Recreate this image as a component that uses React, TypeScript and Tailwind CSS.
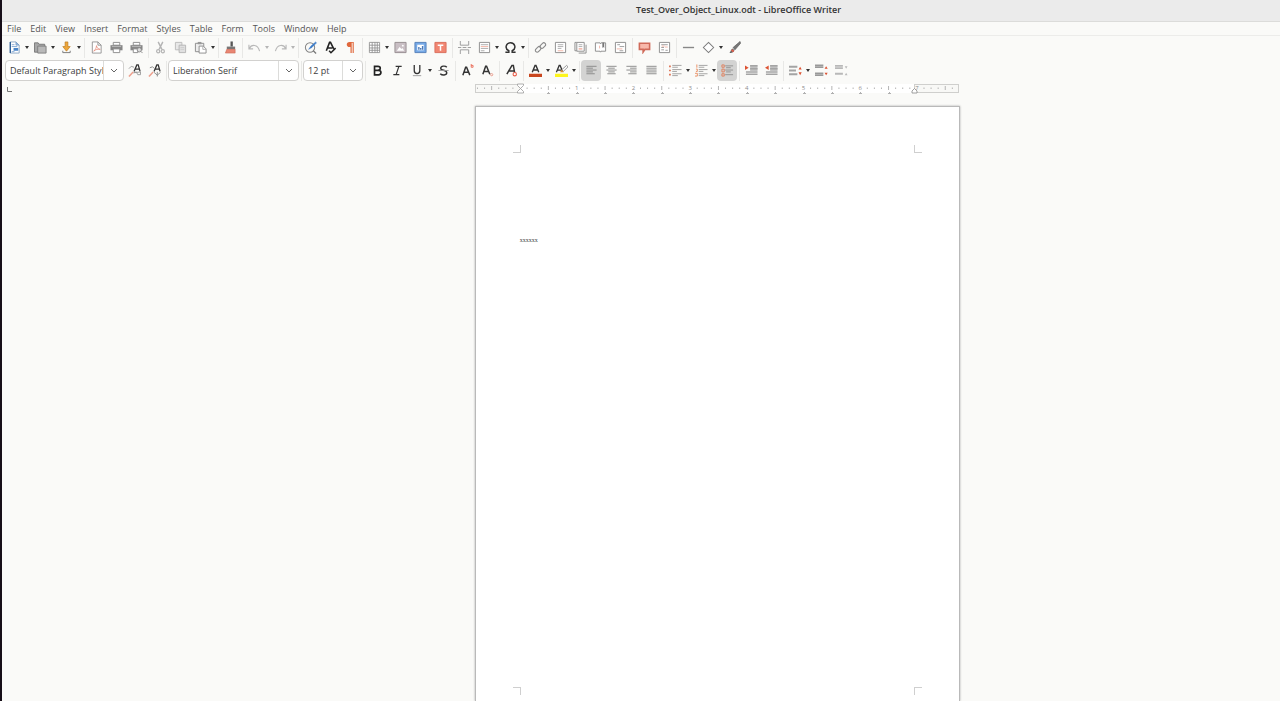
import React from 'react';

const G = '#8a8a8a';
const D = '#333333';
const R = '#e8604c';
const P = '#eda08e';
const B = '#3a7bc8';

// All glyphs are drawn on a 14x14 grid
const ICONS: Record<string, React.ReactNode> = {
  new: (<><path d="M2.500 1h6l3.500 3.500v8.500h-9.500z" fill="#fff" stroke="#8aa6c6" /><path d="M8.500 1v3.500h3.500z" fill="#8fb3dc" stroke="#7d9fc6" strokeWidth=".7" /><path d="M4 4h3M4 6h6M4 11.500h3" stroke="#7fa5d2" /><path d="M6 7.500h5v3h-5z" fill="#4a85c8" /><path d="M2.500 1v12" stroke="#2f5f96" strokeWidth="1.500" /></>),
  open: (<><path d="M.5 2h4l1 1.500h6v8.500h-11z" fill="#a8a8a8" stroke="#777" /><path d="M4 5.500h9v7.500h-9z" fill="#b9b9b9" stroke="#808080" /></>),
  save: (<><path d="M5.500 1h3v5h2.500l-4 5-4-5h2.500z" fill="#eda63a" stroke="#b9771b" strokeWidth=".7" /><path d="M3 10.500v2h8v-2" stroke="#777" fill="none" /></>),
  pdf: (<><path d="M2.500 1h6l3.500 3.500v8.500h-9.500zM8.500 1v3.500h3.500" fill="#fff" stroke={G} strokeWidth=".9" /><path d="M4 11c2-2 3-4 3-6 0 2 2 4 4 4-2-.5-5 0-7 2z" fill="none" stroke="#e58a78" strokeWidth=".8" /></>),
  print: (<><path d="M3.500 1.500h7v3h-7z" fill="#fff" stroke={G} /><path d="M.5 4.500h13v5.500h-13z" fill="#858585" /><path d="M2 6h10" stroke="#bbb" /><path d="M3.500 8.500h7v4h-7z" fill="#fff" stroke={G} /></>),
  preview: (<><path d="M3.500 1.500h7v3h-7z" fill="#fff" stroke={G} /><path d="M.5 4.500h13v5.500h-13z" fill="#858585" /><path d="M2 6h10" stroke="#bbb" /><path d="M3.500 8.500h5v4h-5z" fill="#fff" stroke={G} /><circle cx="10" cy="9.500" r="2.300" fill="#ddd" stroke={G} /><path d="M11.500 11l2 2" stroke={G} /></>),
  cut: (<><path d="M4.500 1l4 8M9.500 1l-4 8" stroke="#b4b4b4" strokeWidth="1.500" /><circle cx="4.500" cy="11" r="1.700" fill="none" stroke="#b4b4b4" strokeWidth="1.300" /><circle cx="9.500" cy="11" r="1.700" fill="none" stroke="#b4b4b4" strokeWidth="1.300" /></>),
  copy: (<><path d="M1.500 1.500h7v8h-7z" fill="#e8e8e8" stroke="#bbb" /><path d="M5.500 4.500h7v8h-7z" fill="#e0e0e0" stroke="#b4b4b4" /><path d="M7 7h4M7 9h4" stroke="#ccc" /></>),
  paste: (<><path d="M1.500 2.500h9v9h-9z" fill="#eee" stroke={G} /><path d="M4 1h4v2.500h-4z" fill="#999" /><path d="M5.500 5.500h4.500l3 3v4.500h-7.500z" fill="#fff" stroke={G} /><path d="M9.500 6v3h3" fill="none" stroke={G} strokeWidth=".7" /></>),
  clone: (<><path d="M7 .5h2.500v5.500h-2.500z" fill="#555" /><path d="M3 6h9v3h-9z" fill="#777" /><path d="M3 9h9v4h-10.500z" fill="#e98673" stroke="#c96450" strokeWidth=".6" /></>),
  undo: (<path d="M1 4v4.500h4.500M1.500 8c2-4.500 9-5 11 3" fill="none" stroke="#b8b8b8" strokeWidth="1.200" />),
  redo: (<path d="M13 4v4.500h-4.500M12.500 8c-2-4.500-9-5-11 3" fill="none" stroke="#b8b8b8" strokeWidth="1.200" />),
  find: (<><circle cx="6.500" cy="7" r="5" fill="none" stroke="#858585" strokeWidth="1.100" /><path d="M10 10.500l3 3" stroke="#777" strokeWidth="1.300" /><path d="M12.500 1l-5 4.500-2.500 3.500 3.500-2 5-5z" fill={B} stroke={B} strokeWidth=".5" /></>),
  spell: (<><path d="M2.500 10.500l3.500-9h1l3.500 7M4 7.500h5" fill="none" stroke="#222" strokeWidth="1.700" /><path d="M5.500 10.500l2 2.200 5-5" fill="none" stroke="#222" strokeWidth="1.600" /></>),
  pilcrow: (<path d="M10.500 1h-4.500c-4 0-4 5.500 0 5.500h1v6.500h1.300v-11h1v11h1.200z" fill="#e0683c" />),
  table: (<><path d="M1.500 1.500h11v11h-11z" fill="#fff" /><path d="M1.500 1.500h11v11h-11zM1.500 4.500h11M1.500 7.500h11M1.500 10h11M4.500 1.500v11M7.500 1.500v11M10 1.500v11" fill="none" stroke="#8d8d8d" strokeWidth=".9" /></>),
  image: (<><path d="M1 1.500h12v11h-12z" fill="#c9bfc4" stroke="#958c90" /><path d="M3 10.500l3-4 2 2 1-1 2 3z" fill="#fff" /><circle cx="9.500" cy="5" r="1" fill="#fff" /></>),
  chart: (<><path d="M1 1.500h12v11h-12z" fill="#76a9e6" stroke="#5580b8" /><path d="M3.500 4h7v6h-7z" fill="#fff" /><path d="M4.500 9.500v-3h1.500v3M6.500 9.500v-2h1.500v2M8.500 9.500v-4h1.500v4" fill="#4b79b8" /></>),
  textbox: (<><path d="M1 1.500h12v11h-12z" fill="#f18672" stroke="#d96d5b" /><path d="M4 4.500h6M7 4.500v6" stroke="#fff" strokeWidth="1.600" /></>),
  pagebreak: (<path d="M2.500 0v4.500h9v-4.500M2.500 14v-4.500h9v4.500M0 7h3.500M5 7h4M10.500 7h3.500" fill="none" stroke="#999" />),
  field: (<><path d="M1.500 1.500h11v11h-11z" fill="#fff" stroke={G} /><path d="M3 4h8M3 8h8M3 10.500h4" stroke="#aaa" /><path d="M3 6h8" stroke={P} strokeWidth=".8" /></>),
  omega: (<path d="M1.500 12h3.700v-1.500c-5-2.500-3-8.500 1.800-8.500s6.800 6 1.800 8.500v1.500h3.700" fill="none" stroke={D} strokeWidth="1.600" />),
  link: (<g fill="none" stroke={G} strokeWidth="1.200"><rect x="6" y="3" width="7" height="4" rx="2" transform="rotate(-45 9.500 5)" /><rect x="1" y="7" width="7" height="4" rx="2" transform="rotate(-45 4.500 9)" /></g>),
  footnote: (<><path d="M1.500 1.500h11v11h-11z" fill="#fff" stroke={G} /><path d="M4 4h6M4 6h6M4 8h4" stroke="#999" strokeWidth=".8" /><path d="M4 10.500h6" stroke={P} strokeWidth=".8" /></>),
  endnote: (<><path d="M3 1.500h-2v9h2M5 13h8v-9" fill="none" stroke={G} /><path d="M3 1.500h8v9.500h-8z" fill="#fff" stroke={G} /><path d="M5 4h4M5 6h4" stroke="#999" strokeWidth=".8" /><path d="M5 8.500h4" stroke={P} strokeWidth="1.300" /></>),
  bookmark: (<><path d="M1.500 2h5l.5 1 .5-1h5v9h-5l-.5 1-.5-1h-5z" fill="#fff" stroke={G} /><path d="M9 1.500h2v6l-1-1-1 1z" fill="#777" /><path d="M6 5v3" stroke={P} strokeWidth=".8" /></>),
  crossref: (<><path d="M1.500 1.500h11v11h-11z" fill="#fff" stroke={G} /><path d="M3.500 4h3M6 6h5M6 10.500h4" stroke="#999" /><path d="M3 8.500h6" stroke={P} strokeWidth=".8" /></>),
  comment: (<path d="M1.500 2.500h11v6.500h-5l-2 3v-3h-4z" fill="#f8b8aa" stroke="#d06a59" strokeWidth="1.700" />),
  track: (<><path d="M1.500 1.500h11v11h-11z" fill="#fff" stroke={G} /><path d="M3.500 4h7M3.500 9.500h3M3.500 7h3M8 10h2.500" stroke="#999" /><path d="M7.500 6.500h3M4 5.500h3" stroke={P} strokeWidth=".8" /></>),
  line: (<path d="M1 7h12" stroke="#888" strokeWidth="1.500" />),
  diamond: (<path d="M7 1.500l5.500 5.500-5.500 5.500-5.500-5.500z" fill="#fff" stroke="#7c7c7c" strokeWidth="1.100" />),
  brush: (<><path d="M13 .5l-7.500 6.500 2 2.500 6-7z" fill="#777" stroke="#555" strokeWidth=".7" /><path d="M5 8l2 2c-1 2.500-3 3-5.500 3 1.500-1.500 1-3.500 3.500-5z" fill="#666" /><path d="M4 9.500l2 2" stroke={R} strokeWidth="2" /></>),
  styleUpdate: (<><path d="M6.500 8l3-7h1.500l2 7M8 5.500h4" fill="none" stroke={D} strokeWidth="1.400" /><path d="M1 5l2.500-2.500 3 1M6 9.500l3-1 1.500 3h3v-3z" fill="none" stroke="#999" /><path d="M5.500 8.500l-4.500 5" stroke={P} strokeWidth="1.600" /></>),
  styleNew: (<><path d="M6.500 8l3-7h1.500l2 7M8 5.500h4" fill="none" stroke={D} strokeWidth="1.400" /><path d="M2 4l3-1 2 2M6.500 9l3.500 3 3.500-3M10 8.500v5" fill="none" stroke="#8a8a8a" /><path d="M5.500 8.500l-4.500 5" stroke={P} strokeWidth="1.600" /></>),
  bold: (<path d="M3.800 2.500h3.700c3.300 0 3.300 4.300 0 4.300h-3.700h4.200c3.600 0 3.600 4.900 0 4.900h-4.200z" fill="none" stroke="#222" strokeWidth="1.800" />),
  italic: (<path d="M5 2.500h6.500M2.500 11.500h6.500M8.500 2.500l-3 9" fill="none" stroke={D} strokeWidth="1.300" />),
  underline: (<><path d="M3.500 1v6c0 4.500 6 4.500 6 0v-6" fill="none" stroke={D} strokeWidth="1.400" /><path d="M2 12.500h9" stroke="#aaa" strokeWidth="1.200" /></>),
  strike: (<><path d="M10.500 3.500c-1.500-2-6.500-1.500-6.500 1 0 3 6.500 1.500 6.500 5 0 3-5 3-7 1" fill="none" stroke={D} strokeWidth="1.500" /><path d="M1.500 7h11" stroke="#999" /></>),
  sup: (<><path d="M2 12l3-8.500h1l3.500 8.500M3 9h5" fill="none" stroke={D} strokeWidth="1.600" /><path d="M11 0v3.500h2v-2h-2" fill="none" stroke={R} strokeWidth=".9" /></>),
  sub: (<><path d="M2 11l3-8.500h1l3.500 8.500M3 8h5" fill="none" stroke={D} strokeWidth="1.600" /><circle cx="11.500" cy="11.500" r="1.200" fill="none" stroke="#e99a8a" /></>),
  clear: (<><path d="M2 11l5.500-9.500h1.500l1.500 8.500M4.500 7.500h5" fill="none" stroke={D} strokeWidth="1.600" /><circle cx="10.500" cy="11" r="1.800" fill="#fff" stroke={R} strokeWidth="1.200" /></>),
  color: (<><path d="M3.500 9l3-7.500h1l3 7.500M4.500 6.500h5" fill="none" stroke={D} strokeWidth="1.500" /><path d="M0 10.500h14v3.500h-14z" fill="#c9471f" /></>),
  highlight: (<><path d="M1.500 9l3-7.500h1l2.500 6M2.500 6.500h5" fill="none" stroke={D} strokeWidth="1.400" /><path d="M12.500 1.500l-5 4.500 1.500 2 5-5z" fill="#fff" stroke="#777" strokeWidth=".8" /><path d="M7 6l2.500 3h-4z" fill="#d88b2e" /><path d="M0 10.500h14v3.500h-14z" fill="#fdf51c" /></>),
  left: (<path d="M1.500 2.500h11M1.500 4.500h7M1.500 6.500h11M1.500 8.500h7M1.500 10.500h9" stroke="#888" />),
  center: (<path d="M1.500 2.500h11M3.500 4.500h7M1.500 6.500h11M3.500 8.500h7M2.500 10.500h9" stroke="#888" />),
  right: (<path d="M1.500 2.500h11M5.500 4.500h7M1.500 6.500h11M5.500 8.500h7M3.500 10.500h9" stroke="#888" />),
  justify: (<path d="M1.500 2.500h11M1.500 4.500h11M1.500 6.500h11M1.500 8.500h11M1.500 10.500h11" stroke="#888" />),
  bullets: (<><path d="M0 2.500h2M0 7h2M0 11.500h2" stroke="#e07a5c" strokeWidth="1.800" /><path d="M3.500 1.500h10M3.500 3.500h6M3.500 6h10M3.500 8h5M3.500 10.500h10M3.500 12.500h6" stroke="#a0a0a0" /></>),
  numbers: (<><path d="M2 .5v3.500M1 5.500h1.500v2.500h-1.500M0 10h2.500v3h-2.500" fill="none" stroke="#e88b5f" /><path d="M4 1.500h9.500M4 3.500h6M4 6h9.500M4 8h5M4 10.500h9.500M4 12.500h6" stroke="#a0a0a0" /></>),
  outline: (<><path d="M1 1h2.500v2.500h-2.500zM1 5.500h2.500v3h-2.500zM1 10.500h2.500v2.500h-2.500z" fill="none" stroke="#e0805c" /><path d="M4.500 2h8.500M5.500 4h5M4.500 6.500h8.500M5.500 8.500h5M4.500 11.500h8.500" stroke="#909090" /></>),
  indent: (<><path d="M0 1.500l4 2.500-4 2.500z" fill="#dc5232" /><path d="M5.500 1.500h8v6h-8z" fill="#c0c0c0" /><path d="M5.500 2h8M5.500 5h8M1 8.500h12.500M1 11h12.500" stroke="#a4a4a4" strokeWidth="1.600" /></>),
  outdent: (<><path d="M4 1.500l-4 2.500 4 2.500z" fill="#dc5232" /><path d="M5.500 1.500h8v6h-8z" fill="#c0c0c0" /><path d="M5.500 2h8M5.500 5h8M1 8.500h12.500M1 11h12.500" stroke="#a4a4a4" strokeWidth="1.600" /></>),
  spacing: (<><path d="M0 3h9M0 7h7.500M0 11h9" stroke="#a4a4a4" strokeWidth="2" /><path d="M12 3l1.700 3h-3.400zM12 12l1.700-3h-3.400z" fill="#dc5232" /></>),
  paraUp: (<><path d="M0 1.500h9M0 3.500h9M0 10h9M0 12h9" stroke="#999" strokeWidth="1.700" /><path d="M12 2.500l1.700 2.500h-3.400zM12 12l1.700-2.500h-3.400z" fill="#dc5232" /></>),
  paraDown: (<><path d="M0 2h8.500M0 4.500h8.500M0 10.500h8.500" stroke="#b8b8b8" strokeWidth="1.900" /><path d="M12 5l1.500-2.500h-3zM12 9.500l1.500 2.500h-3z" fill="#bbb" /></>),
};

interface ToolItem {
  icon: string;
  label: string;
  split?: boolean;
  disabled?: boolean;
  active?: boolean;
}

const STANDARD: ToolItem[][] = [
  [{ icon: 'new', label: 'New', split: true }, { icon: 'open', label: 'Open', split: true }, { icon: 'save', label: 'Save', split: true }],
  [{ icon: 'pdf', label: 'Export as PDF' }, { icon: 'print', label: 'Print' }, { icon: 'preview', label: 'Print Preview' }],
  [{ icon: 'cut', label: 'Cut', disabled: true }, { icon: 'copy', label: 'Copy', disabled: true }, { icon: 'paste', label: 'Paste', split: true }],
  [{ icon: 'clone', label: 'Clone Formatting' }],
  [{ icon: 'undo', label: 'Undo', split: true, disabled: true }, { icon: 'redo', label: 'Redo', split: true, disabled: true }],
  [{ icon: 'find', label: 'Find and Replace' }, { icon: 'spell', label: 'Spelling' }, { icon: 'pilcrow', label: 'Formatting Marks' }],
  [{ icon: 'table', label: 'Insert Table', split: true }, { icon: 'image', label: 'Insert Image' }, { icon: 'chart', label: 'Insert Chart' }, { icon: 'textbox', label: 'Insert Text Box' }],
  [{ icon: 'pagebreak', label: 'Page Break' }, { icon: 'field', label: 'Insert Field', split: true }, { icon: 'omega', label: 'Special Character', split: true }],
  [{ icon: 'link', label: 'Hyperlink' }, { icon: 'footnote', label: 'Footnote' }, { icon: 'endnote', label: 'Endnote' }, { icon: 'bookmark', label: 'Bookmark' }, { icon: 'crossref', label: 'Cross-reference' }],
  [{ icon: 'comment', label: 'Comment' }, { icon: 'track', label: 'Track Changes' }],
  [{ icon: 'line', label: 'Line' }, { icon: 'diamond', label: 'Basic Shapes', split: true }, { icon: 'brush', label: 'Draw Functions' }],
];

const FORMATTING: ToolItem[][] = [
  [{ icon: 'bold', label: 'Bold' }, { icon: 'italic', label: 'Italic' }, { icon: 'underline', label: 'Underline', split: true }, { icon: 'strike', label: 'Strikethrough' }],
  [{ icon: 'sup', label: 'Superscript' }, { icon: 'sub', label: 'Subscript' }],
  [{ icon: 'clear', label: 'Clear Formatting' }],
  [{ icon: 'color', label: 'Font Color', split: true }, { icon: 'highlight', label: 'Highlighting', split: true }],
  [{ icon: 'left', label: 'Align Left', active: true }, { icon: 'center', label: 'Align Center' }, { icon: 'right', label: 'Align Right' }, { icon: 'justify', label: 'Justified' }],
  [{ icon: 'bullets', label: 'Bullets', split: true }, { icon: 'numbers', label: 'Numbering', split: true }, { icon: 'outline', label: 'Outline', active: true }],
  [{ icon: 'indent', label: 'Increase Indent' }, { icon: 'outdent', label: 'Decrease Indent' }],
  [{ icon: 'spacing', label: 'Line Spacing', split: true }, { icon: 'paraUp', label: 'Increase Paragraph Spacing' }, { icon: 'paraDown', label: 'Decrease Paragraph Spacing' }],
];

const MENUS = ['File', 'Edit', 'View', 'Insert', 'Format', 'Styles', 'Table', 'Form', 'Tools', 'Window', 'Help'];

const ToolButton: React.FC<{ item: ToolItem }> = ({ item }) => (
  <div className="flex shrink-0 items-center">
    <button
      aria-label={item.label}
      disabled={item.disabled}
      className={`flex h-[21px] w-5 items-center justify-center rounded-[4px] ${item.active ? 'bg-[#d3d3d2]' : ''}`}
    >
      <svg viewBox="0 0 14 14" className="h-[13px] w-[13px]">{ICONS[item.icon]}</svg>
    </button>
    {item.split && (
      <button aria-label={`${item.label} options`} disabled={item.disabled} className="flex h-5 w-[6px] items-center justify-center">
        <svg viewBox="0 0 4 3" className="h-[3px] w-1"><path d="M0 0h4l-2 3z" fill={item.disabled ? '#b5b5b5' : '#333'} /></svg>
      </button>
    )}
  </div>
);

const Separator = () => (
  <div className="flex w-1 shrink-0 justify-center">
    <div className="h-5 w-px bg-[#e8e8e6]" />
  </div>
);

const ToolGroups: React.FC<{ groups: ToolItem[][] }> = ({ groups }) => (
  <>
    {groups.map((group, i) => (
      <React.Fragment key={i}>
        {i > 0 && <Separator />}
        {group.map((item) => <ToolButton key={item.icon} item={item} />)}
      </React.Fragment>
    ))}
  </>
);

const Combo: React.FC<{ label: string; value: string; width: string }> = ({ label, value, width }) => (
  <div className={`flex h-[21px] shrink-0 overflow-hidden rounded-[4px] border border-[#d2d1cf] bg-white ${width}`}>
    <input aria-label={label} defaultValue={value} className="min-w-0 flex-1 bg-transparent pl-1 text-[9px] text-[#3d3d3d] outline-none" />
    <button aria-label={`${label} list`} className="flex w-5 items-center justify-center border-l border-[#dcdcda]">
      <svg viewBox="0 0 8 5" className="h-[5px] w-2"><path d="M1 1l3 3 3-3" fill="none" stroke="#666" /></svg>
    </button>
  </div>
);

const INCH = 56.7;

const Ruler = () => {
  const origin = 45;
  const ticks = Array.from({ length: 68 }, (_, i) => i - 6);
  return (
    <svg viewBox="0 0 484 12" className="block h-3 w-[484px]">
      <rect x="45" y="1" width="394" height="9" fill="#fff" />
      <rect x=".5" y="1.500" width="45" height="8" fill="#f8f8f6" stroke="#cfcfcd" />
      <rect x="439.500" y="1.500" width="44" height="8" fill="#f8f8f6" stroke="#cfcfcd" />
      {ticks.map((t) => {
        const x = origin + (t * INCH) / 8;
        if (t === 0 || x > 482) return null;
        if (t % 8 === 0) {
          return <text key={t} x={x} y="7" textAnchor="middle" fontSize="6" fill="#8c8c8c">{t / 8}</text>;
        }
        const half = t % 4 === 0;
        return <path key={t} d={half ? `M${x} 3v4` : `M${x} 4.500v1.500`} stroke="#b5b5b5" strokeWidth="1" />;
      })}
      {Array.from({ length: 13 }, (_, i) => {
        const x = Math.round(origin + ((i + 1) * INCH) / 2);
        return <path key={i} d={`M${x - 1} 10.500h3M${x} 9.500h1`} stroke="#b0b0b0" strokeWidth="1" />;
      })}
      <path d="M42.500 1h6v1.500l-3 3-3-3zM42.500 10h6v-1.500l-3-3-3 3z" fill="#fff" stroke="#999" strokeWidth=".8" />
      <path d="M437 10v-2l2.500-2.500 2.500 2.500v2z" fill="#fff" stroke="#888" strokeWidth=".8" />
    </svg>
  );
};

const App: React.FC = () => {
  return (
    <div className="flex min-h-screen flex-col overflow-hidden border-l-2 border-[#160e18] bg-[#fafaf8] font-['Open_Sans','Noto_Sans',sans-serif] text-[9px] leading-3 text-[#555]">
      <header className="flex h-[22px] items-center justify-center border-b border-[#dcdcda] bg-[#ebebeb] pb-[1px] pl-[195px]">
        <h1 className="whitespace-nowrap font-semibold text-[#333]">Test_Over_Object_Linux.odt - LibreOffice Writer</h1>
      </header>

      <nav className="flex h-[14px] items-center gap-[9px] border-b border-[#ececea] pl-[5px]">
        {MENUS.map((menu) => <button key={menu}>{menu}</button>)}
      </nav>

      <div className="flex h-[23px] items-center pl-[2px]" role="toolbar" aria-label="Standard">
        <ToolGroups groups={STANDARD} />
      </div>

      <div className="flex h-[23px] items-center pl-[3px]" role="toolbar" aria-label="Formatting">
        <Combo label="Paragraph Style" value="Default Paragraph Style" width="w-[119px]" />
        <ToolButton item={{ icon: 'styleUpdate', label: 'Update Selected Style' }} />
        <ToolButton item={{ icon: 'styleNew', label: 'New Style from Selection' }} />
        <Separator />
        <Combo label="Font Name" value="Liberation Serif" width="w-[131px]" />
        <Separator />
        <Combo label="Font Size" value="12 pt" width="w-[60px]" />
        <Separator />
        <ToolGroups groups={FORMATTING} />
      </div>

      <main className="flex flex-1 flex-col">
        <div className="flex h-6 pt-[1px]">
          <div className="w-[37%] pl-[5px] pt-1">
            <svg viewBox="0 0 5 5" className="h-[5px] w-[5px]"><path d="M.5 0v4.500h4.500" fill="none" stroke="#777" /></svg>
          </div>
          <Ruler />
        </div>
        <div className="flex flex-1 pl-[37%]">
          <article className="flex w-[485px] flex-col border-x border-t border-[#b9b9b9] bg-white px-[37px] pb-[6px] pt-[38px] shadow-[0_0_2px_#aaa]">
            <div className="flex justify-between">
              <div className="h-2 w-2 border-b border-r border-[#cfcfcf]" />
              <div className="h-2 w-2 border-b border-l border-[#cfcfcf]" />
            </div>
            <p className="flex-1 pl-[7px] pt-[81px] font-['Liberation_Serif',serif] text-[6px] text-[#444]">xxxxxx</p>
            <div className="flex justify-between">
              <div className="h-2 w-2 border-r border-t border-[#cfcfcf]" />
              <div className="h-2 w-2 border-l border-t border-[#cfcfcf]" />
            </div>
          </article>
        </div>
      </main>
    </div>
  );
};

export default App;
